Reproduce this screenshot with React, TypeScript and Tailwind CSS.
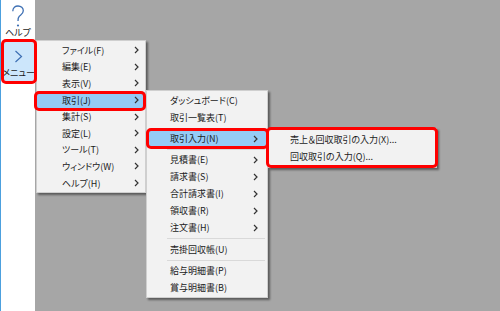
import React from "react";

const font = "font-['Meiryo_UI','Noto_Sans_CJK_JP',sans-serif] [font-feature-settings:'palt']";

function Chevron() {
  return (
    <svg width="5" height="8" viewBox="0 0 5 8" className="shrink-0">
      <path d="M1 1 L4 4 L1 7" fill="none" stroke="#333" strokeWidth="1.2" />
    </svg>
  );
}

type Item = { label: string; sub?: boolean; hl?: boolean } | "sep" | "gap";

function Menu({
  items,
  className,
  pl,
  pr,
  h,
}: {
  items: Item[];
  className: string;
  pl: string;
  pr: string;
  h: string;
}) {
  return (
    <div
      className={`absolute bg-[#f2f2f2] border border-[#cfcfcf] shadow-[2px_2px_2px_rgba(0,0,0,0.45)] py-[1px] flex flex-col ${className}`}
    >
      {items.map((it, i) => {
        if (it === "sep")
          return (
            <div key={i} className="h-[4px] flex items-center pl-[20px] pr-[2px]">
              <div className="h-px w-full bg-[#d9d9d9]" />
            </div>
          );
        if (it === "gap")
          return (
            <div key={i} className="h-[5px] flex items-center pl-[20px] pr-[2px]">
              <div className="h-px w-full bg-[#d9d9d9]" />
            </div>
          );
        return (
          <div
            key={i}
            className={`${h} flex items-center justify-between ${pl} ${pr} ${it.hl ? "bg-[#95cbf6]" : ""}`}
          >
            <span className="text-[9px] leading-none text-[#1a1a1a] whitespace-nowrap">{it.label}</span>
            {it.sub ? <Chevron /> : null}
          </div>
        );
      })}
    </div>
  );
}

export default function App() {
  const m1: Item[] = [
    { label: "ファイル(F)", sub: true },
    { label: "編集(E)", sub: true },
    { label: "表示(V)", sub: true },
    { label: "取引(J)", sub: true, hl: true },
    { label: "集計(S)", sub: true },
    { label: "設定(L)", sub: true },
    { label: "ツール(T)", sub: true },
    { label: "ウィンドウ(W)", sub: true },
    { label: "ヘルプ(H)", sub: true },
  ];
  const m2: Item[] = [
    { label: "ダッシュボード(C)" },
    { label: "取引一覧表(T)" },
    "sep",
    { label: "取引入力(N)", sub: true, hl: true },
    "sep",
    { label: "見積書(E)", sub: true },
    { label: "請求書(S)", sub: true },
    { label: "合計請求書(I)", sub: true },
    { label: "領収書(R)", sub: true },
    { label: "注文書(H)", sub: true },
    "gap",
    { label: "売掛回収帳(U)" },
    "sep",
    { label: "給与明細書(P)" },
    { label: "賞与明細書(B)" },
  ];
  const m3: Item[] = [
    { label: "売上＆回収取引の入力(X)..." },
    { label: "回収取引の入力(Q)..." },
  ];
  return (
    <div className={`relative w-[500px] h-[311px] overflow-hidden flex bg-[#a6a6a6] ${font}`}>
      <div className="w-[35px] h-full bg-white border-l border-[#4ca0de] flex flex-col items-center">
        <svg width="14" height="23" viewBox="0 0 14 23" className="mt-[5px]">
          <path
            d="M1.8 6.2 C1.8 2.8 4.3 1 7 1 C10 1 12.3 3 12.3 5.8 C12.3 8.8 9.8 9.8 8.3 11.3 C7.2 12.4 7 13.5 7 16"
            fill="none"
            stroke="#3d6fb3"
            strokeWidth="1.3"
          />
          <circle cx="7" cy="20.5" r="1.1" fill="#3d6fb3" />
        </svg>
        <span className="text-[9px] leading-none text-[#1a1a1a]">ヘルプ</span>
        <div className="mt-[3px] ml-[1px] w-[34px] h-[43px] bg-[#cce6fb] flex flex-col items-center">
          <svg width="9" height="13" viewBox="0 0 9 13" className="mt-[10px]">
            <path d="M1.5 1 L7.5 6.5 L1.5 12" fill="none" stroke="#3d6fb3" strokeWidth="1.2" />
          </svg>
          <span className="text-[9px] leading-none text-[#1a1a1a] mt-[5px]">メニュー</span>
        </div>
      </div>

      <Menu items={m1} className="left-[36px] top-[40px] w-[110px]" pl="pl-[25px]" pr="pr-[6px]" h="h-[16.6px]" />
      <Menu items={m2} className="left-[146px] top-[90px] w-[122px]" pl="pl-[23px]" pr="pr-[9px]" h="h-[17px]" />
      <Menu items={m3} className="left-[268px] top-[128px] w-[169px] py-[2px]" pl="pl-[21px]" pr="pr-[6px]" h="h-[17px]" />

      {/* red annotation boxes */}
      <div className="absolute left-[1px] top-[39px] w-[36px] h-[45px] border-[3px] border-[#ff0000] rounded-[5px]" />
      <div className="absolute left-[34px] top-[91px] w-[112px] h-[20px] border-[3px] border-[#ff0000] rounded-[5px]" />
      <div className="absolute left-[146px] top-[128px] w-[123px] h-[21px] border-[3px] border-[#ff0000] rounded-[5px]" />
      <div className="absolute left-[266px] top-[127px] w-[172px] h-[41px] border-[3px] border-[#ff0000] rounded-[5px]" />
    </div>
  );
}
